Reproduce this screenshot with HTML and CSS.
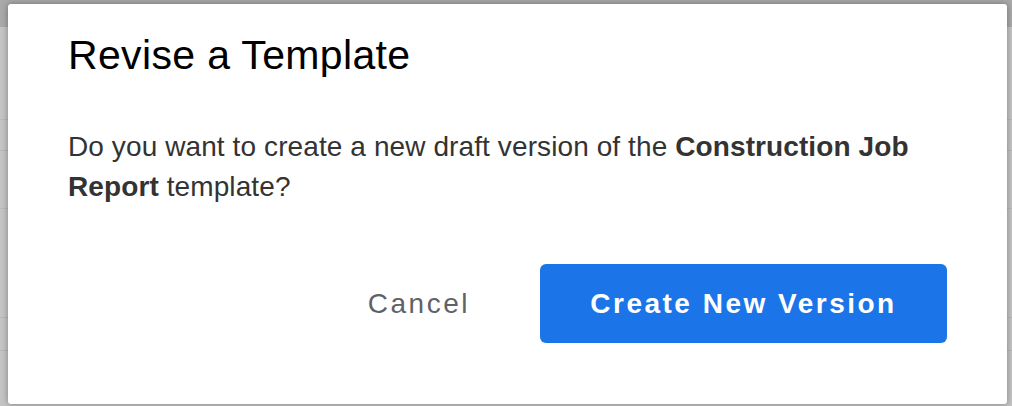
FILE: index.html
```html
<!DOCTYPE html>
<html lang="en">
<head>
<meta charset="utf-8">
<title>Revise a Template</title>
<link rel="stylesheet" href="styles.css">
</head>
<body>
<div class="page">
  <div class="page-header"></div>
  <div class="page-row r1"></div>
  <div class="page-row r2"></div>
  <div class="page-row r3"></div>
  <div class="page-row r4"></div>
  <div class="page-row r5"></div>
</div>
<div class="modal">
  <h1 class="modal-title">Revise a Template</h1>
  <p class="modal-text">Do you want to create a new draft version of the <strong>Construction Job Report</strong> template?</p>
  <div class="modal-actions">
    <button class="btn btn-cancel">Cancel</button>
    <button class="btn btn-primary">Create New Version</button>
  </div>
</div>
</body>
</html>
```

FILE: styles.css
```css
html, body {
  margin: 0;
  padding: 0;
  width: 1012px;
  height: 406px;
  overflow: hidden;
  font-family: "Liberation Sans", Arial, Helvetica, sans-serif;
}

.page {
  width: 1012px;
  height: 406px;
  background: #c4c4c4;
  display: flex;
  flex-direction: column;
}

.page-header {
  height: 27px;
  background: #a9a9a9;
}

.page-row {
  border-bottom: 1px solid #b8b8b8;
}
.r1 { height: 92px; }
.r2 { height: 30px; }
.r3 { height: 57px; }
.r4 { height: 108px; }
.r5 { height: 32px; }

.modal {
  position: absolute;
  left: 8px;
  top: 4px;
  width: 999px;
  height: 400px;
  box-sizing: border-box;
  background: #fff;
  border-radius: 3px;
  box-shadow: 0 0 6px rgba(0, 0, 0, 0.35);
  padding: 27px 60px 0 60px;
  display: flex;
  flex-direction: column;
}

.modal-title {
  margin: 0;
  font-size: 41px;
  font-weight: 400;
  line-height: 48px;
  letter-spacing: 0.35px;
  color: #000;
}

.modal-text {
  margin: 48px 0 0 0;
  font-size: 28px;
  line-height: 40px;
  letter-spacing: 0.1px;
  color: #333;
}
.modal-text strong {
  font-weight: 700;
}

.modal-actions {
  margin-top: 57px;
  display: flex;
  justify-content: flex-end;
  align-items: center;
  gap: 70px;
}

.btn {
  font-family: "Liberation Sans", Arial, Helvetica, sans-serif;
  font-size: 28px;
  letter-spacing: 2.5px;
  border: none;
  cursor: pointer;
}

.btn-cancel {
  background: transparent;
  color: #5f6368;
  padding: 0;
}

.btn-primary {
  width: 407px;
  height: 79px;
  background: #1b74e8;
  color: #fff;
  font-weight: 700;
  border-radius: 6px;
}
```
